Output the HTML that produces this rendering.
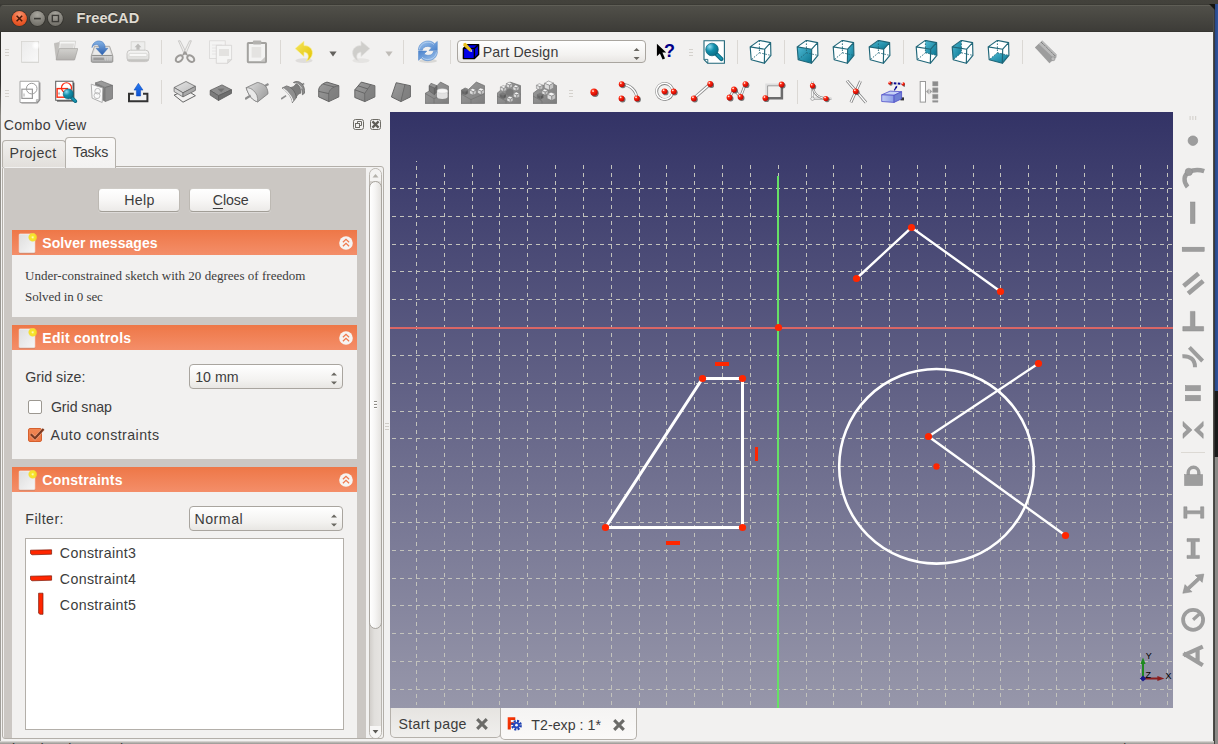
<!DOCTYPE html>
<html lang="en"><head><meta charset="utf-8"><title>FreeCAD</title>
<style>
html,body{margin:0;padding:0}
body{width:1218px;height:744px;overflow:hidden;position:relative;background:#f2f1f0;font-family:"Liberation Sans",sans-serif;font-size:14.5px;color:#3c3c3c}
.abs{position:absolute}
#topstrip{left:0;top:0;width:1218px;height:5px;box-shadow:0 5px 0 #3a3935;background:linear-gradient(#43423c 0,#42413b 80%,#35342f 100%)}
#titlebar{left:0;top:5px;width:1214px;height:27px;background:linear-gradient(#6a6960 0,#504f49 1.2px,#4b4a44 30%,#3d3c38 96%,#302f2b 100%);border-radius:4px 4px 0 0}
#title{text-shadow:0 1px 0 rgba(30,30,26,.7);left:76px;top:9px;font-weight:bold;font-size:14.6px;color:#dfdbd2;letter-spacing:.55px;line-height:18px;white-space:nowrap}
.wbtn{width:15px;height:15px;border-radius:50%;top:11px;box-shadow:0 0 0 1px #33322e}
#leftborder{left:0;top:32px;width:1.3px;height:712px;background:linear-gradient(#2b2a27 0,#2f2e2b 50px,#8e8c86 84px,#9a9893 300px,#a19f9a 100%)}
.tsep{width:1px;height:24px;background:#dbd8d4}
.thandle{width:4px;height:8px;background:repeating-linear-gradient(#d5d2cd 0,#d5d2cd 1px,transparent 1px,transparent 3px)}
.ico{position:absolute;width:24px;height:24px}
svg{display:block}
/* panel */
#combotitle{left:3px;top:116px;line-height:18px;font-size:14.6px;white-space:nowrap}
.tab{border:1px solid #b5b1ab;border-bottom:none;border-radius:4px 4px 0 0;box-sizing:border-box;text-align:center;white-space:nowrap}
#paneframe{left:2px;top:166px;width:382px;height:573px;border:1px solid #b3afa9;border-radius:3px;box-sizing:border-box;background:#f2f1f0}
#scrollbg{left:4px;top:168px;width:362px;height:570px;background:#cbc7c3}
.btn{box-sizing:border-box;border:1px solid #bdb9b3;border-top-color:#cfccc7;border-bottom-color:#a29e97;border-radius:4px;background:linear-gradient(#ffffff,#f8f7f6 50%,#eceae8);height:24px;box-shadow:0 1px 0 rgba(255,255,255,.35)}
.hdr{left:12px;width:345px;height:25px;background:linear-gradient(#ee7747,#f48e69);color:#fff;font-weight:bold;font-size:14.2px;line-height:25px;box-sizing:border-box;padding-left:30px;white-space:nowrap}
.box{left:12px;width:345px;background:#f2f1f0}
.serif{font-family:"Liberation Serif",serif;font-size:12.6px;white-space:nowrap;color:#3c3c3c}
.lbl{white-space:nowrap;line-height:18px}
.spin{box-sizing:border-box;border:1px solid #a9a59f;border-radius:4px;background:linear-gradient(#ffffff,#f3f2f0 65%,#e8e6e3);height:25px;line-height:22px;padding-left:5px;white-space:nowrap}
.chk{box-sizing:border-box;width:14px;height:14px;border:1px solid #9c9891;border-radius:2px;background:#fff}
#list{left:25px;top:538px;width:319px;height:192px;box-sizing:border-box;border:1px solid #b3afa9;background:#fff}
.t{position:absolute;white-space:nowrap;line-height:20px;height:20px}
.hdr{padding:0}
u{text-decoration-thickness:1px;text-underline-offset:2.5px}

</style></head>
<body>
<svg width="0" height="0" style="position:absolute"><defs>
<linearGradient id="gDoc" x1="0" y1="0" x2="1" y2="1"><stop offset="0" stop-color="#ebebeb"/><stop offset="1" stop-color="#f9f9f9"/></linearGradient>
<linearGradient id="gFold" x1="0" y1="0" x2="0" y2="1"><stop offset="0" stop-color="#d2d1ce"/><stop offset="1" stop-color="#b3b1ae"/></linearGradient>
<linearGradient id="gPrn" x1="0" y1="0" x2="0" y2="1"><stop offset="0" stop-color="#f6f6f5"/><stop offset="1" stop-color="#d9d8d6"/></linearGradient>
<linearGradient id="gTeal" x1="0" y1="0" x2="1" y2="1"><stop offset="0" stop-color="#4fbad4"/><stop offset="1" stop-color="#0a7590"/></linearGradient>
<radialGradient id="gLens" cx=".32" cy=".28" r=".8"><stop offset="0" stop-color="#8fdcf2"/><stop offset=".45" stop-color="#1190ac"/><stop offset="1" stop-color="#0a6a82"/></radialGradient>
<radialGradient id="gRed" cx=".35" cy=".3" r=".75"><stop offset="0" stop-color="#ffb0a0"/><stop offset=".3" stop-color="#ff2a10"/><stop offset="1" stop-color="#c00000"/></radialGradient>
<linearGradient id="gBlueA" x1="0" y1="0" x2="0" y2="1"><stop offset="0" stop-color="#86b4e6"/><stop offset="1" stop-color="#2a5eae"/></linearGradient>
<linearGradient id="gBlueR" x1="0" y1="0" x2="1" y2="1"><stop offset="0" stop-color="#a2c6ee"/><stop offset="1" stop-color="#4a82cc"/></linearGradient>
<linearGradient id="gYel" x1="0" y1="0" x2="1" y2="1"><stop offset="0" stop-color="#f5e560"/><stop offset="1" stop-color="#e4c400"/></linearGradient>
<linearGradient id="gDrv" x1="0" y1="0" x2="0" y2="1"><stop offset="0" stop-color="#d8d8d8"/><stop offset="1" stop-color="#a6a6a6"/></linearGradient>
<linearGradient id="gUp" x1="0" y1="0" x2="0" y2="1"><stop offset="0" stop-color="#2a7cf0"/><stop offset="1" stop-color="#0a4fd0"/></linearGradient>
<linearGradient id="gGr1" x1="0" y1="0" x2="1" y2="1"><stop offset="0" stop-color="#e6e6e6"/><stop offset="1" stop-color="#bcbcbc"/></linearGradient>
<linearGradient id="gGr2" x1="0" y1="0" x2="1" y2="1"><stop offset="0" stop-color="#9c9c9c"/><stop offset="1" stop-color="#7e7e7e"/></linearGradient>
<linearGradient id="gBox" x1="0" y1="0" x2="1" y2="0"><stop offset="0" stop-color="#c0ccf4"/><stop offset="1" stop-color="#8a9ce6"/></linearGradient>
<radialGradient id="gGlow"><stop offset="0" stop-color="#fff"/><stop offset=".4" stop-color="#fff" stop-opacity=".85"/><stop offset="1" stop-color="#fff" stop-opacity="0"/></radialGradient>
<linearGradient id="dg" x1="0" y1="0" x2="1" y2="1"><stop offset="0" stop-color="#dedede"/><stop offset="1" stop-color="#f6f6f6"/></linearGradient>
<radialGradient id="yg"><stop offset="0" stop-color="#fffbd0"/><stop offset=".35" stop-color="#f7e52a"/><stop offset=".75" stop-color="#f5de1e" stop-opacity=".9"/><stop offset="1" stop-color="#f5de1e" stop-opacity="0"/></radialGradient>
</defs></svg>
<div id="topstrip" class="abs"></div>
<div id="titlebar" class="abs"></div>
<svg class="abs" style="left:10px;top:9px" width="56" height="19" viewBox="10 9 56 19">
<defs><radialGradient id="wc" cx=".5" cy=".25" r=".8"><stop offset="0" stop-color="#f79572"/><stop offset=".6" stop-color="#ee5f2f"/><stop offset="1" stop-color="#d94a1c"/></radialGradient>
<radialGradient id="wg" cx=".5" cy=".25" r=".8"><stop offset="0" stop-color="#a9a79f"/><stop offset=".6" stop-color="#84827b"/><stop offset="1" stop-color="#6c6a63"/></radialGradient></defs>
<circle cx="19.4" cy="18.5" r="8.3" fill="#33322e"/><circle cx="37.4" cy="18.5" r="8.3" fill="#33322e"/><circle cx="55.4" cy="18.5" r="8.3" fill="#33322e"/>
<circle cx="19.4" cy="18.5" r="7.5" fill="url(#wc)"/><circle cx="37.4" cy="18.5" r="7.5" fill="url(#wg)"/><circle cx="55.4" cy="18.5" r="7.5" fill="url(#wg)"/>
<path d="M16.6 15.7L22.2 21.3M22.2 15.7L16.6 21.3" stroke="#4a1a0a" stroke-width="1.5" fill="none"/>
<path d="M34 18.6H40.8" stroke="#3c3b37" stroke-width="1.6"/>
<rect x="52.3" y="15.4" width="6.2" height="6.2" fill="none" stroke="#3c3b37" stroke-width="1.4"/></svg>
<div class="t" style="left:76.60px;top:8.00px;font-size:14.6px;letter-spacing:0.033px;color:#dfdbd2;font-family:'Liberation Sans',sans-serif;font-weight:bold;text-shadow:0 -1px 0 rgba(30,30,26,.6);">FreeCAD</div>
<div id="leftborder" class="abs"></div>
<div class="abs thandle" style="left:5px;top:49px"></div>
<svg class="ico" style="left:18px;top:40px" width="24" height="24" viewBox="0 0 24 24"><rect x="3.6" y="2.2" width="17.4" height="20.8" fill="#b9b7b3" opacity=".45"/><rect x="3.5" y="1.5" width="17" height="20.6" fill="url(#gDoc)" stroke="#d6d5d2" stroke-width=".8"/><circle cx="18" cy="5.4" r="4.6" fill="url(#gGlow)"/></svg>
<svg class="ico" style="left:54px;top:40px" width="24" height="24" viewBox="0 0 24 24"><path d="M.4 3.4L4.8 2.6L6 4.2H20V19.8H2.4Z" fill="#c2c0bd" stroke="#b0aeab" stroke-width=".5"/><path d="M5.6 1.2H21.6L20 11H4.6Z" fill="#f6f6f5" stroke="#c9c7c4" stroke-width=".7"/><path d="M6.6 3.6H20L19.2 9.2H6Z" fill="#dddcda"/><path d="M5.2 8.6H23.8L20.6 19.9H2.2Z" fill="url(#gFold)" stroke="#a5a3a0" stroke-width=".7"/></svg>
<svg class="ico" style="left:90px;top:40px" width="24" height="24" viewBox="0 0 24 24"><path d="M4.5 6.3H19.6L22.8 15.7H1.3Z" fill="#dddcdb" stroke="#a5a4a2" stroke-width=".9"/><path d="M5.6 7.6H18.6L20.8 14.6H3.2Z" fill="#ebebea"/><rect x="1.3" y="15.5" width="21.5" height="6.8" rx="1" fill="url(#gDrv)" stroke="#8d8d8b" stroke-width=".9"/><rect x="3.4" y="17.6" width="10.5" height="2.4" fill="#9a9a9a"/><path d="M15.6 17.2V20.6M17.4 17.2V20.6M19.2 17.2V20.6M21 17.2V20.6" stroke="#cfcfcf" stroke-width=".9"/><path d="M2 7.6C2.2 3.2 6 .4 9.8 1C13.6 1.6 15.3 4.6 15.2 8.3H17.9L12.2 14.9L6 8.3H9.4C9.4 6 8.2 4.6 6.4 4.6C4.4 4.6 2.9 5.8 2 7.6Z" fill="url(#gBlueA)" stroke="#3a6fb8" stroke-width=".5"/></svg>
<svg class="ico" style="left:126px;top:40px" width="24" height="24" viewBox="0 0 24 24"><rect x="5.1" y="1.8" width="13.8" height="9.6" fill="#eeeeed" stroke="#cfcecb" stroke-width=".7"/><path d="M12 3.6L15.4 7.2H13.6V9.8H10.4V7.2H8.6Z" fill="#bdbcba"/><rect x="1" y="10.2" width="21.9" height="11.4" rx="3.4" fill="url(#gPrn)" stroke="#c3c2bf" stroke-width=".9"/><rect x="3" y="13.4" width="18" height="3.2" rx="1.2" fill="#f8f8f7" stroke="#cdccc9" stroke-width=".6"/><path d="M2.4 20.2H21.6" stroke="#c4c3c0" stroke-width="1.8" stroke-linecap="round"/></svg>
<div class="abs tsep" style="left:161px;top:40px"></div>
<svg class="ico" style="left:173px;top:40px" width="24" height="24" viewBox="0 0 24 24"><path d="M5.4 .8L7.2 .8L13.4 13L11.4 14.4Z" fill="#efeeec" stroke="#bcbab7" stroke-width=".7"/><path d="M18.4 .8L16.6 .8L10.6 13L12.6 14.4Z" fill="#efeeec" stroke="#bcbab7" stroke-width=".7"/><ellipse cx="6.4" cy="18.6" rx="4" ry="2.7" transform="rotate(-40 6.4 18.8)" fill="none" stroke="#9d9b98" stroke-width="2"/><ellipse cx="17.6" cy="18.6" rx="4" ry="2.7" transform="rotate(40 17.6 18.8)" fill="none" stroke="#9d9b98" stroke-width="2"/><path d="M10 15L12 12.4L14 15" fill="none" stroke="#9d9b98" stroke-width="2"/></svg>
<svg class="ico" style="left:209px;top:40px" width="24" height="24" viewBox="0 0 24 24"><rect x=".6" y=".8" width="15.6" height="17.8" fill="#f4f4f3" stroke="#d9d8d6" stroke-width=".8"/><path d="M3 5H13M3 8H13M3 11H13M3 14H13" stroke="#e2e1df" stroke-width=".8"/><path d="M7.3 5.3H22.6V19.6L18.6 23.3H7.3Z" fill="#f5f5f4" stroke="#d3d2d0" stroke-width=".8"/><rect x="10" y="9" width="10" height="7" fill="#e3e2e0"/><path d="M22.6 19.6H18.6V23.3Z" fill="#e0dfdd" stroke="#d3d2d0" stroke-width=".6"/></svg>
<svg class="ico" style="left:245px;top:40px" width="24" height="24" viewBox="0 0 24 24"><rect x="2.8" y="3" width="18.2" height="19.2" rx=".6" fill="#f3f3f2" stroke="#a3a29f" stroke-width="2"/><rect x="7.9" y=".4" width="8.4" height="4.2" rx="1" fill="#b3b2af"/><rect x="6.6" y="7" width="9.6" height="10.6" fill="#e4e3e1"/><path d="M20 17V21.2H15.6Z" fill="#c9c8c5"/></svg>
<div class="abs tsep" style="left:280px;top:40px"></div>
<svg class="ico" style="left:291.5px;top:40px" width="24" height="24" viewBox="0 0 24 24"><ellipse cx="12" cy="20.6" rx="8.6" ry="2.4" fill="#9a9890" opacity=".22"/><path d="M3.1 8.6L12 1.1V5.6C17 5.4 20.6 8.6 20.4 13.2C20.2 16.8 17.8 19.8 14.2 21.3C16 18.8 16.6 16.8 16 15C15.4 13.2 14 12.2 12 12.2V16.6Z" fill="url(#gYel)" stroke="#f8f0a0" stroke-width=".7"/></svg>
<svg class="abs" style="left:327.5px;top:49.5px" width="10" height="8" viewBox="0 0 10 8"><path d="M1.4 1.6H8.6L5 6.4Z" fill="#63615d"/></svg>
<svg class="ico" style="left:349px;top:40px" width="24" height="24" viewBox="0 0 24 24"><ellipse cx="12" cy="20.6" rx="8.6" ry="2.4" fill="#9a9890" opacity=".14"/><path d="M20.9 8.6L12 1.1V5.6C7 5.4 3.4 8.6 3.6 13.2C3.8 16.8 6.2 19.8 9.8 21.3C8 18.8 7.4 16.8 8 15C8.6 13.2 10 12.2 12 12.2V16.6Z" fill="#cfcecb" stroke="#e2e1df" stroke-width=".7"/></svg>
<svg class="abs" style="left:383.5px;top:49.5px" width="10" height="8" viewBox="0 0 10 8"><path d="M1.4 1.6H8.6L5 6.4Z" fill="#bfbcb7"/></svg>
<div class="abs tsep" style="left:403px;top:40px"></div>
<svg class="ico" style="left:415.5px;top:40px" width="24" height="24" viewBox="0 0 24 24"><ellipse cx="12" cy="20.9" rx="9" ry="2" fill="#9a9890" opacity=".28"/><g><path d="M2.4 10.2C2.4 4.5 7 1 12.2 1C15 1 17.2 2.2 18.6 3.8L21.3 1.4V10.6H13L15.6 7.8C14.2 6.8 12.8 6.4 11.4 6.4C8.4 6.4 6.6 8.2 6.4 10.2Z" fill="url(#gBlueR)" stroke="#4b82c8" stroke-width=".5"/><path d="M3.4 9.4C3.8 5.2 7.6 2.2 12.2 2.2C14.6 2.2 16.6 3.2 17.8 4.6" fill="none" stroke="#c2d9f2" stroke-width=".9" opacity=".8"/></g><g transform="rotate(180 11.9 10.85)"><path d="M2.4 10.2C2.4 4.5 7 1 12.2 1C15 1 17.2 2.2 18.6 3.8L21.3 1.4V10.6H13L15.6 7.8C14.2 6.8 12.8 6.4 11.4 6.4C8.4 6.4 6.6 8.2 6.4 10.2Z" fill="url(#gBlueR)" stroke="#4b82c8" stroke-width=".5"/><path d="M3.4 9.4C3.8 5.2 7.6 2.2 12.2 2.2C14.6 2.2 16.6 3.2 17.8 4.6" fill="none" stroke="#c2d9f2" stroke-width=".9" opacity=".8"/></g></svg>
<div class="abs tsep" style="left:450px;top:40px"></div>
<div class="abs spin" style="left:457px;top:40px;width:189px;height:23px"></div>
<svg class="abs" style="left:462px;top:42px" width="18" height="18" viewBox="0 0 18 18"><path d="M1.4 6.4L5.4 2.6H16.6V12.6L12.4 16.6H1.4Z" fill="#0000e8" stroke="#000" stroke-width="1.4" stroke-linejoin="round"/><path d="M1.4 6.4H12.4V16.6M12.4 6.4L16.6 2.6" fill="none" stroke="#000" stroke-width="1.4"/><path d="M1.6 1.2L3.6 .8L9.8 7.6L7.6 9.4L1.2 3.4Z" fill="#e8c020"/><path d="M7.6 9.4L9.8 7.6L10.2 10Z" fill="#c8c8c8"/></svg>
<div class="t" style="left:482.70px;top:42.00px;font-size:14.2px;letter-spacing:0.146px;color:#3c3c3c;font-family:'Liberation Sans',sans-serif;">Part Design</div>
<svg class="abs" style="left:633px;top:47px" width="8" height="14" viewBox="0 0 8 14"><path d="M.6 4L3.6 1L6.6 4ZM.6 10L3.6 13L6.6 10Z" fill="#6a6862"/></svg>
<svg class="ico" style="left:653px;top:40px" width="24" height="24" viewBox="0 0 24 24"><path d="M3.9 3.8V16.2L6.9 13.4L9.6 19.6L12 18.6L9.4 12.6H13.2Z" fill="#000"/><text x="10.9" y="16.8" font-family="Liberation Sans,sans-serif" font-weight="bold" font-size="18" fill="#000088">?</text></svg>
<div class="abs thandle" style="left:689px;top:49px"></div>
<svg class="ico" style="left:701.5px;top:40px" width="24" height="24" viewBox="0 0 24 24"><path d="M2 .8H22.4V23.2H5.6L2 19.6Z" fill="#fff" stroke="#1f6678" stroke-width="1.1"/><path d="M2.4 19.4H5.8V23" fill="none" stroke="#1f6678" stroke-width=".9"/><path d="M14.8 14.4L19.4 19" stroke="#0c6a82" stroke-width="4.2" stroke-linecap="round"/><path d="M15.2 14.8L19.2 18.8" stroke="#1594b0" stroke-width="2.2" stroke-linecap="round"/><circle cx="10" cy="9.5" r="6.3" fill="url(#gLens)" stroke="#0c6279" stroke-width=".7"/></svg>
<div class="abs tsep" style="left:737px;top:40px"></div>
<svg class="ico" style="left:749px;top:40px" width="24" height="24" viewBox="0 0 24 24"><path d="M1.2 6.9L10.4 0.4L21.6 2.6L21.9 15.4L15.3 23.3L2.2 19.7Z" fill="#fff"/><path d="M10.4 0.4L10.4 12.8L2.2 19.7M10.4 12.8L21.9 15.4" fill="none" stroke="#1f6678" stroke-width=".9" stroke-dasharray="1.6 1.4"/><path d="M1.2 6.9L15.7 9.2L15.3 23.3L2.2 19.7ZM1.2 6.9L10.4 0.4L21.6 2.6L15.7 9.2ZM15.7 9.2L21.6 2.6L21.9 15.4L15.3 23.3Z" fill="none" stroke="#1f6678" stroke-width="1.15" stroke-linejoin="round"/></svg>
<div class="abs tsep" style="left:784px;top:40px"></div>
<svg class="ico" style="left:795.5px;top:40px" width="24" height="24" viewBox="0 0 24 24"><path d="M1.2 6.9L10.4 0.4L21.6 2.6L21.9 15.4L15.3 23.3L2.2 19.7Z" fill="#fff"/><path d="M1.2 6.9L15.7 9.2L15.3 23.3L2.2 19.7Z" fill="url(#gTeal)"/><path d="M10.4 0.4L10.4 12.8L2.2 19.7M10.4 12.8L21.9 15.4" fill="none" stroke="#1f6678" stroke-width=".9" stroke-dasharray="1.6 1.4"/><path d="M1.2 6.9L15.7 9.2L15.3 23.3L2.2 19.7ZM1.2 6.9L10.4 0.4L21.6 2.6L15.7 9.2ZM15.7 9.2L21.6 2.6L21.9 15.4L15.3 23.3Z" fill="none" stroke="#1f6678" stroke-width="1.15" stroke-linejoin="round"/></svg>
<svg class="ico" style="left:831.5px;top:40px" width="24" height="24" viewBox="0 0 24 24"><path d="M1.2 6.9L10.4 0.4L21.6 2.6L21.9 15.4L15.3 23.3L2.2 19.7Z" fill="#fff"/><path d="M15.7 9.2L21.6 2.6L21.9 15.4L15.3 23.3Z" fill="url(#gTeal)"/><path d="M10.4 0.4L10.4 12.8L2.2 19.7M10.4 12.8L21.9 15.4" fill="none" stroke="#1f6678" stroke-width=".9" stroke-dasharray="1.6 1.4"/><path d="M1.2 6.9L15.7 9.2L15.3 23.3L2.2 19.7ZM1.2 6.9L10.4 0.4L21.6 2.6L15.7 9.2ZM15.7 9.2L21.6 2.6L21.9 15.4L15.3 23.3Z" fill="none" stroke="#1f6678" stroke-width="1.15" stroke-linejoin="round"/></svg>
<svg class="ico" style="left:867.5px;top:40px" width="24" height="24" viewBox="0 0 24 24"><path d="M1.2 6.9L10.4 0.4L21.6 2.6L21.9 15.4L15.3 23.3L2.2 19.7Z" fill="#fff"/><path d="M1.2 6.9L10.4 0.4L21.6 2.6L15.7 9.2Z" fill="url(#gTeal)"/><path d="M10.4 0.4L10.4 12.8L2.2 19.7M10.4 12.8L21.9 15.4" fill="none" stroke="#1f6678" stroke-width=".9" stroke-dasharray="1.6 1.4"/><path d="M1.2 6.9L15.7 9.2L15.3 23.3L2.2 19.7ZM1.2 6.9L10.4 0.4L21.6 2.6L15.7 9.2ZM15.7 9.2L21.6 2.6L21.9 15.4L15.3 23.3Z" fill="none" stroke="#1f6678" stroke-width="1.15" stroke-linejoin="round"/></svg>
<div class="abs tsep" style="left:903px;top:40px"></div>
<svg class="ico" style="left:914.5px;top:40px" width="24" height="24" viewBox="0 0 24 24"><path d="M1.2 6.9L10.4 0.4L21.6 2.6L21.9 15.4L15.3 23.3L2.2 19.7Z" fill="#fff"/><path d="M10.4 0.4L21.6 2.6L21.9 15.4L10.4 12.8Z" fill="url(#gTeal)"/><path d="M10.4 0.4L10.4 12.8L2.2 19.7M10.4 12.8L21.9 15.4" fill="none" stroke="#1f6678" stroke-width=".9" stroke-dasharray="1.6 1.4"/><path d="M1.2 6.9L15.7 9.2L15.3 23.3L2.2 19.7ZM1.2 6.9L10.4 0.4L21.6 2.6L15.7 9.2ZM15.7 9.2L21.6 2.6L21.9 15.4L15.3 23.3Z" fill="none" stroke="#1f6678" stroke-width="1.15" stroke-linejoin="round"/></svg>
<svg class="ico" style="left:950.5px;top:40px" width="24" height="24" viewBox="0 0 24 24"><path d="M1.2 6.9L10.4 0.4L21.6 2.6L21.9 15.4L15.3 23.3L2.2 19.7Z" fill="#fff"/><path d="M1.2 6.9L10.4 0.4L10.4 12.8L2.2 19.7Z" fill="url(#gTeal)"/><path d="M10.4 0.4L10.4 12.8L2.2 19.7M10.4 12.8L21.9 15.4" fill="none" stroke="#1f6678" stroke-width=".9" stroke-dasharray="1.6 1.4"/><path d="M1.2 6.9L15.7 9.2L15.3 23.3L2.2 19.7ZM1.2 6.9L10.4 0.4L21.6 2.6L15.7 9.2ZM15.7 9.2L21.6 2.6L21.9 15.4L15.3 23.3Z" fill="none" stroke="#1f6678" stroke-width="1.15" stroke-linejoin="round"/></svg>
<svg class="ico" style="left:986.5px;top:40px" width="24" height="24" viewBox="0 0 24 24"><path d="M1.2 6.9L10.4 0.4L21.6 2.6L21.9 15.4L15.3 23.3L2.2 19.7Z" fill="#fff"/><path d="M2.2 19.7L15.3 23.3L21.9 15.4L10.4 12.8Z" fill="url(#gTeal)"/><path d="M10.4 0.4L10.4 12.8L2.2 19.7M10.4 12.8L21.9 15.4" fill="none" stroke="#1f6678" stroke-width=".9" stroke-dasharray="1.6 1.4"/><path d="M1.2 6.9L15.7 9.2L15.3 23.3L2.2 19.7ZM1.2 6.9L10.4 0.4L21.6 2.6L15.7 9.2ZM15.7 9.2L21.6 2.6L21.9 15.4L15.3 23.3Z" fill="none" stroke="#1f6678" stroke-width="1.15" stroke-linejoin="round"/></svg>
<div class="abs tsep" style="left:1022px;top:40px"></div>
<svg class="ico" style="left:1034px;top:40px" width="24" height="24" viewBox="0 0 24 24"><path d="M8.2 .6L22.6 14.4L22.4 17.4L15.4 23.3L14.8 20.2L1 7.5Z" fill="#a9a9a9"/><path d="M8.2 .6L22.6 14.4L19 17.6L4.6 4Z" fill="#b9b9b9"/><path d="M1 7.5L4.6 4L19 17.6L15.4 23.3Z" fill="#9d9d9d"/><path d="M7 2L9.6 4.6M10 4.8L11.6 6.4M12.2 7L13.8 8.6M14.4 9.2L16 10.8M16.6 11.4L18.2 13M18.6 13.4L21.2 16" stroke="#787878" stroke-width=".9"/><circle cx="19" cy="18.8" r="2" fill="#bdbdbd" stroke="#8c8c8c" stroke-width=".6"/></svg>
<div class="abs thandle" style="left:5px;top:89.5px"></div>
<svg class="ico" style="left:18px;top:80px" width="24" height="24" viewBox="0 0 24 24"><path d="M3.4 2.6H22.4V20L19.6 23.6H3.4Z" fill="#8e8e8e"/><path d="M2 1.25H21V19.4L18.2 22.5H2Z" fill="#fff" stroke="#a4a4a4" stroke-width="1"/><circle cx="13.7" cy="8.6" r="5.3" fill="none" stroke="#9a9a9a" stroke-width="1"/><rect x="3.9" y="9.2" width="10.5" height="9.2" fill="none" stroke="#9a9a9a" stroke-width="1.2"/><path d="M18.4 22.3V19.6H20.8" fill="none" stroke="#a4a4a4" stroke-width=".8"/><path d="M6 12.5L7.2 15L6 17.5L4.9 15Z" fill="#cfcfcf"/></svg>
<svg class="ico" style="left:54px;top:80px" width="24" height="24" viewBox="0 0 24 24"><path d="M3 2.6H20.4V21.6H3Z" fill="#555"/><rect x="1.7" y="1.25" width="17.3" height="19" fill="#fff" stroke="#5a5a5a" stroke-width="1"/><circle cx="12.5" cy="7.75" r="5" fill="none" stroke="#ff2a10" stroke-width="1.2"/><rect x="3.1" y="8.6" width="10.3" height="8.6" fill="none" stroke="#ff2a10" stroke-width="1.4"/><path d="M5 11.5L6 13.5L5 15.5L4.2 13.5Z" fill="#b0b0b0"/><path d="M17.6 17.4L21.4 21.2" stroke="#0c6a82" stroke-width="3.6" stroke-linecap="round"/><path d="M18 17.8L21.2 21" stroke="#1594b0" stroke-width="1.8" stroke-linecap="round"/><circle cx="14.3" cy="14" r="5.1" fill="url(#gLens)" stroke="#0c6279" stroke-width=".6"/></svg>
<svg class="ico" style="left:90px;top:80px" width="24" height="24" viewBox="0 0 24 24"><path d="M5.1 3L11.3 1L22.5 5.4L15.1 7.5Z" fill="#9a9a9a" stroke="#6c6c6c" stroke-width=".7"/><path d="M15.1 7.5L22.5 5.4V18.7L15.1 21.6Z" fill="#8c8c8c" stroke="#6c6c6c" stroke-width=".7"/><path d="M5.1 3L15.1 7.5V21.6L5.1 17Z" fill="#7a7a7a"/><path d="M1.25 4.2L12.8 8L12.2 22.5L2.1 18.1Z" fill="#fafafa" stroke="#a8a8a8" stroke-width=".9"/><circle cx="7.6" cy="11.2" r="2.8" fill="none" stroke="#b8b8b8" stroke-width=".9"/><circle cx="7" cy="15.6" r="3" fill="none" stroke="#b8b8b8" stroke-width=".9"/></svg>
<svg class="ico" style="left:126px;top:80px" width="24" height="24" viewBox="0 0 24 24"><path d="M7.8 13.7H3V21.3H21.4V13.7H17" fill="none" stroke="#333" stroke-width="2"/><path d="M12.4 3.3L17 10.1H14.6V16H10.4V10.1H8Z" fill="url(#gUp)" stroke="#0a44b8" stroke-width=".5"/></svg>
<div class="abs tsep" style="left:161px;top:80px"></div>
<svg class="ico" style="left:173px;top:80px" width="24" height="24" viewBox="0 0 24 24"><path d="M1.1 15.1L10 22.2L22.4 15.7L13.4 10Z" fill="none" stroke="#555" stroke-width=".9"/><path d="M1.1 7.5L13 1.5L22.4 6.3L10 12.8Z" fill="url(#gGr1)" stroke="#6a6a6a" stroke-width=".8"/><path d="M1.1 7.5L10 12.8V16.9L1.1 11.6Z" fill="#d6d6d6" stroke="#6a6a6a" stroke-width=".8"/><path d="M10 12.8L22.4 6.3V10.4L10 16.9Z" fill="#a9a9a9" stroke="#6a6a6a" stroke-width=".8"/></svg>
<svg class="ico" style="left:209px;top:80px" width="24" height="24" viewBox="0 0 24 24"><path d="M1.2 10.4L13 4.9L22.5 9.8L9.5 15.7Z" fill="#8f8f8f" stroke="#5c5c5c" stroke-width=".8"/><path d="M1.2 10.4L9.5 15.7V20.5L1.2 15.1Z" fill="#7c7c7c" stroke="#5c5c5c" stroke-width=".8"/><path d="M9.5 15.7L22.5 9.8V13.4L9.5 20.5Z" fill="#6e6e6e" stroke="#5c5c5c" stroke-width=".8"/><path d="M8.4 8.8L15.6 8.4L12.2 12.2Z" fill="#737373"/></svg>
<svg class="ico" style="left:245px;top:80px" width="24" height="24" viewBox="0 0 24 24"><defs><linearGradient id="gRv" x1="0" y1="0" x2="1" y2=".6"><stop offset="0" stop-color="#dcdcdc"/><stop offset=".45" stop-color="#c4c4c4"/><stop offset="1" stop-color="#a2a2a2"/></linearGradient></defs><path d="M19.8 5.9L23.5 4" stroke="#8e8e8e" stroke-width="2.2"/><path d="M1.15 7.7L12.2 2.5C13.4 2.4 14.4 2.7 15.3 3.25C18 4 20 5.4 21.1 6.9C22.4 9 23 11.4 23 13.8L12.7 21.9C10.8 21.4 9 20.4 7.5 19C5.4 17 4 14.8 3 12.5C2.2 10.8 1.6 9.2 1.15 7.7Z" fill="url(#gRv)" stroke="#7a7a7a" stroke-width=".8" stroke-linejoin="round"/><path d="M1.15 7.7C4.4 7.6 6.8 8.8 8.5 10.6C10 12 11.2 13.6 11.9 15.3C12.6 17.4 12.8 19.6 12.7 21.9C10.8 21.4 9 20.4 7.5 19C5.4 17 4 14.8 3 12.5C2.2 10.8 1.6 9.2 1.15 7.7Z" fill="#e9e9e9" stroke="#7a7a7a" stroke-width=".7" stroke-linejoin="round"/><path d="M.1 19L5.6 15.5" stroke="#8e8e8e" stroke-width="2.2"/></svg>
<svg class="ico" style="left:281px;top:80px" width="24" height="24" viewBox="0 0 24 24"><path d="M20.9 4.8L23.2 3.5" stroke="#8e8e8e" stroke-width="1.6"/><path d="M12.4 2.5C14 1.4 16 1.2 17.7 1.7C20.4 2.6 22.2 4.8 23 7.5C23.6 9.6 23.8 11.4 23.5 13.2L21.4 14.8C21.6 12 21 9.6 19.8 7.5C18.2 4.8 15.6 3 12.4 2.5Z" fill="#8c8c8c" stroke="#5e5e5e" stroke-width=".7"/><path d="M14.2 3.2C17.4 4 19.6 6 20.8 8.6" fill="none" stroke="#e0e0e0" stroke-width=".9"/><path d="M9.3 7.5C11.6 7.4 13.6 6 15.1 3.8C18 5 20.2 8.6 19.8 13.2C17.4 13.6 15.8 15.4 15.1 18C14.4 13 12.4 9.6 9.3 7.5Z" fill="#7c7c7c" stroke="#5e5e5e" stroke-width=".6"/><path d="M1.15 8L5.6 5.9C9.6 6.8 12.6 9.6 14.2 13.4C14.9 15 15.2 16.6 15.1 18L11.4 22.7C11.2 19.8 10 17.4 8.4 15.3C6.6 12.6 4.2 10.2 1.15 8Z" fill="#8e8e8e" stroke="#5e5e5e" stroke-width=".7"/><path d="M2.2 8.6C5.6 10.8 8 13.4 9.8 16.2C11 18 11.6 19.8 11.8 21.6" fill="none" stroke="#f0f0f0" stroke-width="1.2"/><path d="M.1 19L5.1 15.6" stroke="#8e8e8e" stroke-width="1.6"/></svg>
<svg class="ico" style="left:317px;top:80px" width="24" height="24" viewBox="0 0 24 24"><path d="M1.7 10C1.7 7 5 3.4 10 2.1L21.8 5.7V16.9L11.8 21.6L1.7 16.9Z" fill="url(#gGr2)" stroke="#5c5c5c" stroke-width=".9"/><path d="M11.8 21.6V14C11.8 10 16 6.6 21.8 5.7" fill="none" stroke="#5c5c5c" stroke-width=".8"/><path d="M1.7 11.4L11.8 13.6" fill="none" stroke="#5c5c5c" stroke-width=".8"/><path d="M6 4L17.4 7" fill="none" stroke="#5c5c5c" stroke-width=".7"/><path d="M11.8 21.6V14C11.8 10 16 6.6 21.8 5.7V16.9Z" fill="#7b7b7b" opacity=".6"/></svg>
<svg class="ico" style="left:353px;top:80px" width="24" height="24" viewBox="0 0 24 24"><path d="M1.8 9.8L8.3 2.1L21.9 5.7V16.9L11.8 21.6L1.8 17.5Z" fill="url(#gGr2)" stroke="#5c5c5c" stroke-width=".9"/><path d="M11.8 21.6V13.4L17.6 4.8M1.8 9.8L11.8 13.4M5 5.8L15 9" fill="none" stroke="#5c5c5c" stroke-width=".8"/><path d="M11.8 21.6V13.4L17.6 4.8L21.9 5.7V16.9Z" fill="#7b7b7b" opacity=".55"/></svg>
<svg class="ico" style="left:389px;top:80px" width="24" height="24" viewBox="0 0 24 24"><path d="M2.4 16.9L7.2 2.7L21.4 5.7V16.9L11.9 21.6Z" fill="url(#gGr2)" stroke="#5c5c5c" stroke-width=".9"/><path d="M11.9 21.6L16 4.6" fill="none" stroke="#5c5c5c" stroke-width=".8"/><path d="M11.9 21.6L16 4.6L21.4 5.7V16.9Z" fill="#7b7b7b" opacity=".55"/></svg>
<svg class="ico" style="left:425px;top:80px" width="24" height="24" viewBox="0 0 24 24"><path d="M.1 23.4V13.4L4.3 11V5.7L6 3.3L12 5.7L15.5 2.1L23.8 6.3V23.4Z" fill="url(#gGr2)" stroke="#6a6a6a" stroke-width=".7"/><path d="M.1 13.4L9 18.6V23.4M9 18.6L23.8 13" fill="none" stroke="#6e6e6e" stroke-width=".7"/><path d="M4.3 5.7L9.4 8V14.6L4.3 11Z" fill="#777" stroke="#5c5c5c" stroke-width=".6"/><path d="M9.4 8L12 5.7V11.4L9.4 14.6Z" fill="#6a6a6a" stroke="#5c5c5c" stroke-width=".6"/><path d="M12 11V17C12 19.6 22.6 19.6 22.6 17V11Z" fill="#e2e2e2"/><ellipse cx="17.3" cy="11" rx="5.3" ry="2.2" fill="#f7f7f7" stroke="#c8c8c8" stroke-width=".5"/></svg>
<svg class="ico" style="left:461px;top:80px" width="24" height="24" viewBox="0 0 24 24"><path d="M0 23.4V10.4L4.1 8L7.6 9.4L15.3 2.1L23.6 5.7V23.4Z" fill="url(#gGr2)" stroke="#6a6a6a" stroke-width=".7"/><path d="M0 14L10 19.6V23.4M10 19.6L23.6 13.6" fill="none" stroke="#707070" stroke-width=".7"/><path d="M0.6999999999999997 10.45L3.4899999999999998 8.9L6.9 10.295L4.109999999999999 11.845Z" fill="#7a7a7a" stroke="#777" stroke-width=".5"/><path d="M0.6999999999999997 10.45L4.109999999999999 11.845V15.1L0.6999999999999997 13.55Z" fill="#666" stroke="#777" stroke-width=".5"/><path d="M4.109999999999999 11.845L6.9 10.295V13.55L4.109999999999999 15.1Z" fill="#5a5a5a" stroke="#777" stroke-width=".5"/><path d="M8.5 10.100000000000001L11.56 8.4L15.3 9.93L12.24 11.63Z" fill="#f4f4f4" stroke="#777" stroke-width=".5"/><path d="M8.5 10.100000000000001L12.24 11.63V15.200000000000001L8.5 13.5Z" fill="#dcdcdc" stroke="#777" stroke-width=".5"/><path d="M12.24 11.63L15.3 9.93V13.5L12.24 15.200000000000001Z" fill="#c4c4c4" stroke="#777" stroke-width=".5"/><path d="M16.6 9.700000000000001L19.66 8.0L23.4 9.530000000000001L20.34 11.23Z" fill="#f4f4f4" stroke="#777" stroke-width=".5"/><path d="M16.6 9.700000000000001L20.34 11.23V14.8L16.6 13.1Z" fill="#dcdcdc" stroke="#777" stroke-width=".5"/><path d="M20.34 11.23L23.4 9.530000000000001V13.1L20.34 14.8Z" fill="#c4c4c4" stroke="#777" stroke-width=".5"/></svg>
<svg class="ico" style="left:497px;top:80px" width="24" height="24" viewBox="0 0 24 24"><path d="M0 23.4V13.4L13 2.1L23.7 5.7V23.4Z" fill="url(#gGr2)" stroke="#6a6a6a" stroke-width=".7"/><path d="M0 16L9 21V23.4M9 21L23.7 14" fill="none" stroke="#707070" stroke-width=".7"/><ellipse cx="12.6" cy="12.4" rx="4" ry="3.4" fill="#777"/><path d="M3.4 7.05L6.1899999999999995 5.5L9.6 6.895L6.8100000000000005 8.445Z" fill="#f4f4f4" stroke="#777" stroke-width=".5"/><path d="M3.4 7.05L6.8100000000000005 8.445V11.7L3.4 10.15Z" fill="#dcdcdc" stroke="#777" stroke-width=".5"/><path d="M6.8100000000000005 8.445L9.6 6.895V10.15L6.8100000000000005 11.7Z" fill="#c4c4c4" stroke="#777" stroke-width=".5"/><path d="M9.3 3.6500000000000004L12.09 2.1L15.5 3.495L12.71 5.045Z" fill="#f4f4f4" stroke="#777" stroke-width=".5"/><path d="M9.3 3.6500000000000004L12.71 5.045V8.3L9.3 6.75Z" fill="#dcdcdc" stroke="#777" stroke-width=".5"/><path d="M12.71 5.045L15.5 3.495V6.75L12.71 8.3Z" fill="#c4c4c4" stroke="#777" stroke-width=".5"/><path d="M15.799999999999999 6.45L18.59 4.9L22.0 6.295L19.209999999999997 7.845Z" fill="#f4f4f4" stroke="#777" stroke-width=".5"/><path d="M15.799999999999999 6.45L19.209999999999997 7.845V11.1L15.799999999999999 9.55Z" fill="#dcdcdc" stroke="#777" stroke-width=".5"/><path d="M19.209999999999997 7.845L22.0 6.295V9.55L19.209999999999997 11.1Z" fill="#c4c4c4" stroke="#777" stroke-width=".5"/><path d="M16.4 13.549999999999999L19.19 12.0L22.6 13.395L19.81 14.945Z" fill="#f4f4f4" stroke="#777" stroke-width=".5"/><path d="M16.4 13.549999999999999L19.81 14.945V18.2L16.4 16.65Z" fill="#dcdcdc" stroke="#777" stroke-width=".5"/><path d="M19.81 14.945L22.6 13.395V16.65L19.81 18.2Z" fill="#c4c4c4" stroke="#777" stroke-width=".5"/><path d="M9.9 17.75L12.69 16.2L16.1 17.595L13.31 19.145Z" fill="#f4f4f4" stroke="#777" stroke-width=".5"/><path d="M9.9 17.75L13.31 19.145V22.400000000000002L9.9 20.85Z" fill="#dcdcdc" stroke="#777" stroke-width=".5"/><path d="M13.31 19.145L16.1 17.595V20.85L13.31 22.400000000000002Z" fill="#c4c4c4" stroke="#777" stroke-width=".5"/><path d="M2.8000000000000003 14.149999999999999L5.59 12.6L9.0 13.995L6.210000000000001 15.545Z" fill="#7a7a7a" stroke="#777" stroke-width=".5"/><path d="M2.8000000000000003 14.149999999999999L6.210000000000001 15.545V18.8L2.8000000000000003 17.25Z" fill="#666" stroke="#777" stroke-width=".5"/><path d="M6.210000000000001 15.545L9.0 13.995V17.25L6.210000000000001 18.8Z" fill="#5a5a5a" stroke="#777" stroke-width=".5"/></svg>
<svg class="ico" style="left:533px;top:80px" width="24" height="24" viewBox="0 0 24 24"><path d="M0 23.4V13.4L15.4 1.5L23.7 5.7V23.4Z" fill="url(#gGr2)" stroke="#6a6a6a" stroke-width=".7"/><path d="M0 16L9 21V23.4" fill="none" stroke="#707070" stroke-width=".7"/><path d="M3.3999999999999995 5.300000000000001L6.279999999999999 3.7L9.8 5.140000000000001L6.92 6.74Z" fill="#f4f4f4" stroke="#777" stroke-width=".5"/><path d="M3.3999999999999995 5.300000000000001L6.92 6.74V10.100000000000001L3.3999999999999995 8.5Z" fill="#dcdcdc" stroke="#777" stroke-width=".5"/><path d="M6.92 6.74L9.8 5.140000000000001V8.5L6.92 10.100000000000001Z" fill="#c4c4c4" stroke="#777" stroke-width=".5"/><path d="M11.4 3.3L15.54 1.0L20.6 3.07L16.46 5.369999999999999Z" fill="#f4f4f4" stroke="#777" stroke-width=".5"/><path d="M11.4 3.3L16.46 5.369999999999999V10.2L11.4 7.8999999999999995Z" fill="#dcdcdc" stroke="#777" stroke-width=".5"/><path d="M16.46 5.369999999999999L20.6 3.07V7.8999999999999995L16.46 10.2Z" fill="#c4c4c4" stroke="#777" stroke-width=".5"/><path d="M8.8 10.649999999999999L11.59 9.1L15.0 10.495L12.21 12.045Z" fill="#f4f4f4" stroke="#777" stroke-width=".5"/><path d="M8.8 10.649999999999999L12.21 12.045V15.299999999999999L8.8 13.75Z" fill="#dcdcdc" stroke="#777" stroke-width=".5"/><path d="M12.21 12.045L15.0 10.495V13.75L12.21 15.299999999999999Z" fill="#c4c4c4" stroke="#777" stroke-width=".5"/><path d="M14.2 14.299999999999999L17.979999999999997 12.2L22.599999999999998 14.089999999999998L18.82 16.189999999999998Z" fill="#f4f4f4" stroke="#777" stroke-width=".5"/><path d="M14.2 14.299999999999999L18.82 16.189999999999998V20.599999999999998L14.2 18.5Z" fill="#dcdcdc" stroke="#777" stroke-width=".5"/><path d="M18.82 16.189999999999998L22.599999999999998 14.089999999999998V18.5L18.82 20.599999999999998Z" fill="#c4c4c4" stroke="#777" stroke-width=".5"/><path d="M4.1 14.75L6.890000000000001 13.200000000000001L10.3 14.595L7.51 16.145Z" fill="#7a7a7a" stroke="#777" stroke-width=".5"/><path d="M4.1 14.75L7.51 16.145V19.400000000000002L4.1 17.85Z" fill="#666" stroke="#777" stroke-width=".5"/><path d="M7.51 16.145L10.3 14.595V17.85L7.51 19.400000000000002Z" fill="#5a5a5a" stroke="#777" stroke-width=".5"/></svg>
<div class="abs thandle" style="left:569px;top:89.5px"></div>
<svg class="ico" style="left:582px;top:80px" width="24" height="24" viewBox="0 0 24 24"><circle cx="13.1" cy="13.299999999999999" r="3.6" fill="#4a4a4a" opacity=".75"/><circle cx="12" cy="12.2" r="3.6" fill="url(#gRed)"/><circle cx="11.1" cy="11.2" r=".8" fill="#fff" opacity=".75"/></svg>
<svg class="ico" style="left:618px;top:80px" width="24" height="24" viewBox="0 0 24 24"><path d="M3.7 4.2C12 4.6 18.4 10.4 18.9 18.4" fill="none" stroke="#8a8a8a" stroke-width="3"/><path d="M3.7 4.2C12 4.6 18.4 10.4 18.9 18.4" fill="none" stroke="#fff" stroke-width="1.4"/><circle cx="4.800000000000001" cy="5.300000000000001" r="2.9" fill="#4a4a4a" opacity=".75"/><circle cx="3.7" cy="4.2" r="2.9" fill="url(#gRed)"/><circle cx="2.8000000000000003" cy="3.2" r=".8" fill="#fff" opacity=".75"/><circle cx="4.6" cy="19.5" r="2.9" fill="#4a4a4a" opacity=".75"/><circle cx="3.5" cy="18.4" r="2.9" fill="url(#gRed)"/><circle cx="2.6" cy="17.4" r=".8" fill="#fff" opacity=".75"/><circle cx="20.0" cy="19.5" r="2.9" fill="#4a4a4a" opacity=".75"/><circle cx="18.9" cy="18.4" r="2.9" fill="url(#gRed)"/><circle cx="18.0" cy="17.4" r=".8" fill="#fff" opacity=".75"/></svg>
<svg class="ico" style="left:654px;top:80px" width="24" height="24" viewBox="0 0 24 24"><circle cx="10.75" cy="11.55" r="8.1" fill="none" stroke="#808080" stroke-width="2.9"/><circle cx="10.55" cy="11.3" r="8.1" fill="none" stroke="#fff" stroke-width="1.6"/><circle cx="11.6" cy="12.4" r="2.9" fill="#4a4a4a" opacity=".75"/><circle cx="10.5" cy="11.3" r="2.9" fill="url(#gRed)"/><circle cx="9.6" cy="10.3" r=".8" fill="#fff" opacity=".75"/><circle cx="20.8" cy="12.6" r="2.9" fill="#4a4a4a" opacity=".75"/><circle cx="19.7" cy="11.5" r="2.9" fill="url(#gRed)"/><circle cx="18.8" cy="10.5" r=".8" fill="#fff" opacity=".75"/></svg>
<svg class="ico" style="left:690px;top:80px" width="24" height="24" viewBox="0 0 24 24"><path d="M3.8 18.4L20.2 4" stroke="#8a8a8a" stroke-width="3.2"/><path d="M3.8 18.4L20.2 4" stroke="#fff" stroke-width="1.5"/><circle cx="4.9" cy="19.5" r="2.9" fill="#4a4a4a" opacity=".75"/><circle cx="3.8" cy="18.4" r="2.9" fill="url(#gRed)"/><circle cx="2.9" cy="17.4" r=".8" fill="#fff" opacity=".75"/><circle cx="21.3" cy="5.1" r="2.9" fill="#4a4a4a" opacity=".75"/><circle cx="20.2" cy="4" r="2.9" fill="url(#gRed)"/><circle cx="19.3" cy="3" r=".8" fill="#fff" opacity=".75"/></svg>
<svg class="ico" style="left:726px;top:80px" width="24" height="24" viewBox="0 0 24 24"><path d="M3.5 17.5L8 9.5L14.5 16.9L19.4 4.1" fill="none" stroke="#8a8a8a" stroke-width="2.8"/><path d="M3.5 17.5L8 9.5L14.5 16.9L19.4 4.1" fill="none" stroke="#fff" stroke-width="1.2"/><circle cx="4.6" cy="18.6" r="2.9" fill="#4a4a4a" opacity=".75"/><circle cx="3.5" cy="17.5" r="2.9" fill="url(#gRed)"/><circle cx="2.6" cy="16.5" r=".8" fill="#fff" opacity=".75"/><circle cx="9.1" cy="10.6" r="2.9" fill="#4a4a4a" opacity=".75"/><circle cx="8" cy="9.5" r="2.9" fill="url(#gRed)"/><circle cx="7.1" cy="8.5" r=".8" fill="#fff" opacity=".75"/><circle cx="15.6" cy="18.0" r="2.9" fill="#4a4a4a" opacity=".75"/><circle cx="14.5" cy="16.9" r="2.9" fill="url(#gRed)"/><circle cx="13.6" cy="15.899999999999999" r=".8" fill="#fff" opacity=".75"/><circle cx="20.5" cy="5.199999999999999" r="2.9" fill="#4a4a4a" opacity=".75"/><circle cx="19.4" cy="4.1" r="2.9" fill="url(#gRed)"/><circle cx="18.5" cy="3.0999999999999996" r=".8" fill="#fff" opacity=".75"/></svg>
<svg class="ico" style="left:762px;top:80px" width="24" height="24" viewBox="0 0 24 24"><path d="M4.2 18.3H19.9V4.2" fill="none" stroke="#6c6c6c" stroke-width="2.5"/><path d="M4.4 18V4.6H19.6" fill="none" stroke="#dedede" stroke-width="2.3"/><path d="M5.6 17V5.8H18.6" fill="none" stroke="#8a8a8a" stroke-width=".8"/><circle cx="4.4" cy="19.200000000000003" r="2.9" fill="#4a4a4a" opacity=".75"/><circle cx="3.3" cy="18.1" r="2.9" fill="url(#gRed)"/><circle cx="2.4" cy="17.1" r=".8" fill="#fff" opacity=".75"/><circle cx="20.700000000000003" cy="5.6" r="2.9" fill="#4a4a4a" opacity=".75"/><circle cx="19.6" cy="4.5" r="2.9" fill="url(#gRed)"/><circle cx="18.700000000000003" cy="3.5" r=".8" fill="#fff" opacity=".75"/></svg>
<div class="abs tsep" style="left:797px;top:80px"></div>
<svg class="ico" style="left:808.5px;top:80px" width="24" height="24" viewBox="0 0 24 24"><path d="M3.5 1.4V18.8H22.4" fill="none" stroke="#9a9a9a" stroke-width="2.2"/><path d="M3.5 1.4V18.8H22.4" fill="none" stroke="#fff" stroke-width=".9"/><path d="M3.5 5.7C4 13 9 18 16.9 18.5" fill="none" stroke="#8a8a8a" stroke-width="2.4"/><path d="M3.5 5.7C4 13 9 18 16.9 18.5" fill="none" stroke="#fff" stroke-width="1"/><path d="M1.4 18.8L3.5 16.6L5.6 18.8L3.5 21Z" fill="#eee" stroke="#8a8a8a" stroke-width=".6"/><circle cx="4.6" cy="6.800000000000001" r="2.6" fill="#4a4a4a" opacity=".75"/><circle cx="3.5" cy="5.7" r="2.6" fill="url(#gRed)"/><circle cx="2.6" cy="4.7" r=".8" fill="#fff" opacity=".75"/><circle cx="18.0" cy="19.6" r="2.6" fill="#4a4a4a" opacity=".75"/><circle cx="16.9" cy="18.5" r="2.6" fill="url(#gRed)"/><circle cx="15.999999999999998" cy="17.5" r=".8" fill="#fff" opacity=".75"/></svg>
<svg class="ico" style="left:844px;top:80px" width="24" height="24" viewBox="0 0 24 24"><path d="M2.9 .6L22 22.5M16.5 1.2L6.9 22.3" stroke="#7e7e7e" stroke-width="2.8"/><path d="M2.9 .6L22 22.5M16.5 1.2L6.9 22.3" stroke="#fff" stroke-width="1.3"/><circle cx="12.799999999999999" cy="12.299999999999999" r="2.8" fill="#4a4a4a" opacity=".75"/><circle cx="11.7" cy="11.2" r="2.8" fill="url(#gRed)"/><circle cx="10.799999999999999" cy="10.2" r=".8" fill="#fff" opacity=".75"/></svg>
<svg class="ico" style="left:881px;top:80px" width="24" height="24" viewBox="0 0 24 24"><path d="M19.4 17.4H23V20.4H19.4Z" fill="#333"/><path d="M.7 14.8L9.1 11.1L20.6 11.7L13.1 15.3Z" fill="#c4d0f6" stroke="#4e4ec8" stroke-width=".8"/><path d="M.7 14.8L13.1 15.3V22.4L.7 21.5Z" fill="url(#gBox)" stroke="#4e4ec8" stroke-width=".8"/><path d="M13.1 15.3L20.6 11.7V18.8L13.1 22.4Z" fill="#6f80d4" stroke="#4e4ec8" stroke-width=".8"/><path d="M8.8 2.9L22.2 4" stroke="#0a0a90" stroke-width="2" stroke-dasharray="2.6 1.4"/><path d="M13.3 10.4L15.3 7" stroke="#0a0a90" stroke-width="1.2"/><path d="M16.2 5.6L16 8.4L13.9 7.2Z" fill="#0a0a90"/><circle cx="9.9" cy="4.0" r="1.7" fill="#4a4a4a" opacity=".75"/><circle cx="8.8" cy="2.9" r="1.7" fill="url(#gRed)"/><circle cx="7.9" cy="1.9" r=".8" fill="#fff" opacity=".75"/><circle cx="23.3" cy="5.1" r="1.7" fill="#4a4a4a" opacity=".75"/><circle cx="22.2" cy="4" r="1.7" fill="url(#gRed)"/><circle cx="21.3" cy="3" r=".8" fill="#fff" opacity=".75"/></svg>
<svg class="ico" style="left:917px;top:80px" width="24" height="24" viewBox="0 0 24 24"><rect x="3.2" y="1.5" width="5.3" height="20.6" fill="#fff" stroke="#9a9a9a" stroke-width="1"/><path d="M15.6 1.5H21V6H15.6ZM15.6 7.8H21V12.4H15.6ZM15.6 14.2H21V18.8H15.6ZM15.6 20.4H21V22.2H15.6Z" fill="#8c8c8c" stroke="#a8a8a8" stroke-width=".5"/><path d="M9 11.5L12 8.4V14.6ZM15.2 11.5L12.2 8.4V14.6Z" fill="#a2a2a2"/><path d="M12.1 8V15" stroke="#f2f1f0" stroke-width=".8"/></svg>
<div class="t" style="left:3.70px;top:115.00px;font-size:14.2px;letter-spacing:0.275px;color:#3c3c3c;font-family:'Liberation Sans',sans-serif;">Combo View</div>
<svg class="abs" style="left:352px;top:118px" width="30" height="13" viewBox="0 0 30 13"><g fill="none" stroke="#6e6c66" stroke-width="1"><rect x="1.5" y="1.5" width="10" height="10" rx="2"/><rect x="18.5" y="1.5" width="10" height="10" rx="2"/><path d="M5.5 5.5V3.5H9.5V7.5H7.5"/><rect x="3.5" y="5.5" width="4" height="4"/></g><path d="M20.4 3.4L26.6 9.6M26.6 3.4L20.4 9.6" stroke="#5e5c56" stroke-width="2.2" fill="none"/></svg>
<div id="paneframe" class="abs"></div>
<div id="scrollbg" class="abs"></div>
<div class="abs tab" style="left:2px;top:140px;width:64px;height:27px;background:linear-gradient(#f1f0ee,#e2dfdb)"></div>
<div class="abs tab" style="left:65px;top:137px;width:51px;height:31px;background:linear-gradient(#faf9f8,#f3f2f1)"></div>
<div class="t" style="left:9.60px;top:143.00px;font-size:14.2px;letter-spacing:0.401px;color:#3c3c3c;font-family:'Liberation Sans',sans-serif;">Project</div>
<div class="t" style="left:73.10px;top:142.00px;font-size:14.2px;letter-spacing:-0.280px;color:#3c3c3c;font-family:'Liberation Sans',sans-serif;">Tasks</div>
<div class="abs" style="left:369px;top:168px;width:13px;height:571px;box-sizing:border-box;border:1px solid #b9b5af;border-radius:7px;background:linear-gradient(90deg,#d2cfcb,#e1dfdc 40%,#e6e4e1)"></div>
<div class="abs" style="left:370px;top:169px;width:11px;height:12px;border-radius:6px 6px 0 0;background:#f4f3f2"></div>
<div class="abs" style="left:370px;top:726px;width:11px;height:12px;border-radius:0 0 6px 6px;background:#f7f6f5"></div>
<div class="abs" style="left:369px;top:181px;width:13px;height:448px;box-sizing:border-box;border:1px solid #a8a49e;border-radius:7px;background:linear-gradient(90deg,#ffffff,#f6f5f4 45%,#e4e2df)"></div>
<svg class="abs" style="left:372px;top:173px" width="7" height="5" viewBox="0 0 7 5"><path d="M.5 4.5L3.5 1L6.5 4.5Z" fill="#b4b1ab"/></svg>
<svg class="abs" style="left:372px;top:729px" width="7" height="5" viewBox="0 0 7 5"><path d="M.6 1L3.5 4.4L6.4 1Z" fill="#5c5a55"/></svg>
<div class="abs" style="left:374px;top:401px;width:3px;height:9px;background:repeating-linear-gradient(#8f8c86 0,#8f8c86 1px,#fff 1px,#fff 2px,transparent 2px,transparent 3px)"></div>
<div class="abs" style="left:385px;top:423px;width:4px;height:7px;background:repeating-linear-gradient(#cfccc7 0,#cfccc7 1px,transparent 1px,transparent 3px)"></div>
<div class="abs btn" style="left:98px;top:188px;width:82px"></div>
<div class="abs btn" style="left:189px;top:188px;width:82px"></div>
<div class="t" style="left:124.20px;top:190.00px;font-size:14.2px;letter-spacing:0.324px;color:#3c3c3c;font-family:'Liberation Sans',sans-serif;">Help</div>
<div class="t" style="left:212.80px;top:190.00px;font-size:14.2px;letter-spacing:-0.101px;color:#3c3c3c;font-family:'Liberation Sans',sans-serif;"><u>C</u>lose</div>
<div class="abs hdr" style="top:230px"></div>
<div class="abs box" style="top:255px;height:62px"></div>
<svg class="abs" style="left:18px;top:233px" width="20" height="22" viewBox="0 0 20 22">
<rect x="1" y="1.5" width="16" height="19" rx="1" fill="#8d6c5c" opacity=".55"/>
<rect x="1.2" y="1" width="15.6" height="18.6" rx=".8" fill="url(#dg)" stroke="#fbfbfb" stroke-width=".6"/>
<circle cx="14.7" cy="4.3" r="4.8" fill="url(#yg)"/></svg>
<div class="t" style="left:42.30px;top:233.00px;font-size:14.0px;letter-spacing:0.066px;color:#fff;font-family:'Liberation Sans',sans-serif;font-weight:bold;">Solver messages</div>
<svg class="abs" style="left:338px;top:235px" width="16" height="16" viewBox="0 0 16 16"><circle cx="8" cy="8" r="6.8" fill="#f6f4f2"/><path d="M4.9 7.3L8 4.3L11.1 7.3M4.9 11.3L8 8.3L11.1 11.3" fill="none" stroke="#ef7a4d" stroke-width="1.25"/></svg>
<div class="abs hdr" style="top:325px"></div>
<div class="abs box" style="top:350px;height:109px"></div>
<svg class="abs" style="left:18px;top:328px" width="20" height="22" viewBox="0 0 20 22">
<rect x="1" y="1.5" width="16" height="19" rx="1" fill="#8d6c5c" opacity=".55"/>
<rect x="1.2" y="1" width="15.6" height="18.6" rx=".8" fill="url(#dg)" stroke="#fbfbfb" stroke-width=".6"/>
<circle cx="14.7" cy="4.3" r="4.8" fill="url(#yg)"/></svg>
<div class="t" style="left:42.30px;top:328.00px;font-size:14.0px;letter-spacing:0.272px;color:#fff;font-family:'Liberation Sans',sans-serif;font-weight:bold;">Edit controls</div>
<svg class="abs" style="left:338px;top:330px" width="16" height="16" viewBox="0 0 16 16"><circle cx="8" cy="8" r="6.8" fill="#f6f4f2"/><path d="M4.9 7.3L8 4.3L11.1 7.3M4.9 11.3L8 8.3L11.1 11.3" fill="none" stroke="#ef7a4d" stroke-width="1.25"/></svg>
<div class="abs hdr" style="top:467px"></div>
<div class="abs box" style="top:492px;height:246px"></div>
<svg class="abs" style="left:18px;top:470px" width="20" height="22" viewBox="0 0 20 22">
<rect x="1" y="1.5" width="16" height="19" rx="1" fill="#8d6c5c" opacity=".55"/>
<rect x="1.2" y="1" width="15.6" height="18.6" rx=".8" fill="url(#dg)" stroke="#fbfbfb" stroke-width=".6"/>
<circle cx="14.7" cy="4.3" r="4.8" fill="url(#yg)"/></svg>
<div class="t" style="left:42.30px;top:470.00px;font-size:14.0px;letter-spacing:0.246px;color:#fff;font-family:'Liberation Sans',sans-serif;font-weight:bold;">Constraints</div>
<svg class="abs" style="left:338px;top:472px" width="16" height="16" viewBox="0 0 16 16"><circle cx="8" cy="8" r="6.8" fill="#f6f4f2"/><path d="M4.9 7.3L8 4.3L11.1 7.3M4.9 11.3L8 8.3L11.1 11.3" fill="none" stroke="#ef7a4d" stroke-width="1.25"/></svg>
<div class="t" style="left:25.00px;top:266.00px;font-size:13px;letter-spacing:0.025px;color:#3c3c3c;font-family:'Liberation Serif',serif;">Under-constrained sketch with 20 degrees of freedom</div>
<div class="t" style="left:25.00px;top:287.00px;font-size:13px;letter-spacing:-0.085px;color:#3c3c3c;font-family:'Liberation Serif',serif;">Solved in 0 sec</div>
<div class="t" style="left:25.30px;top:367.00px;font-size:14.2px;letter-spacing:0.013px;color:#3c3c3c;font-family:'Liberation Sans',sans-serif;">Grid size:</div>
<div class="abs spin" style="left:189px;top:364px;width:154px"></div>
<div class="t" style="left:195.20px;top:367.00px;font-size:14.2px;letter-spacing:0.020px;color:#3c3c3c;font-family:'Liberation Sans',sans-serif;">10 mm</div>
<svg class="abs" style="left:329.5px;top:371px" width="8" height="15" viewBox="0 0 8 15"><path d="M1 4.5L4 1.5L7 4.5Z M1 10.5L4 13.5L7 10.5Z" fill="#6a6862"/></svg>
<div class="abs chk" style="left:28px;top:400px"></div>
<div class="t" style="left:50.90px;top:397.00px;font-size:14.2px;letter-spacing:-0.052px;color:#3c3c3c;font-family:'Liberation Sans',sans-serif;">Grid snap</div>
<div class="abs chk" style="left:28px;top:428px;background:linear-gradient(#f08653,#ee7745);border-color:#d5602d"></div>
<svg class="abs" style="left:27px;top:426px" width="18" height="18" viewBox="0 0 18 18"><path d="M3.8 8.3L8 12.3L16.6 3.1" fill="none" stroke="#f9c9b0" stroke-width="3.4" opacity=".55"/><path d="M3.8 8.3L8 12.3L16.6 3.1" fill="none" stroke="#7a3a22" stroke-width="2.2"/></svg>
<div class="t" style="left:50.50px;top:425.00px;font-size:14.2px;letter-spacing:0.455px;color:#3c3c3c;font-family:'Liberation Sans',sans-serif;">Auto constraints</div>
<div class="t" style="left:25.30px;top:509.00px;font-size:14.2px;letter-spacing:0.457px;color:#3c3c3c;font-family:'Liberation Sans',sans-serif;">Filter:</div>
<div class="abs spin" style="left:189px;top:506px;width:154px"></div>
<div class="t" style="left:194.40px;top:509.00px;font-size:14.2px;letter-spacing:0.523px;color:#3c3c3c;font-family:'Liberation Sans',sans-serif;">Normal</div>
<svg class="abs" style="left:329.5px;top:513px" width="8" height="15" viewBox="0 0 8 15"><path d="M1 4.5L4 1.5L7 4.5Z M1 10.5L4 13.5L7 10.5Z" fill="#6a6862"/></svg>
<div id="list" class="abs"></div>
<div class="t" style="left:59.80px;top:543.00px;font-size:14.2px;letter-spacing:0.353px;color:#3c3c3c;font-family:'Liberation Sans',sans-serif;">Constraint3</div>
<div class="t" style="left:59.80px;top:569.00px;font-size:14.2px;letter-spacing:0.353px;color:#3c3c3c;font-family:'Liberation Sans',sans-serif;">Constraint4</div>
<div class="t" style="left:59.80px;top:595.00px;font-size:14.2px;letter-spacing:0.353px;color:#3c3c3c;font-family:'Liberation Sans',sans-serif;">Constraint5</div>
<svg class="abs" style="left:28px;top:545px" width="28" height="74" viewBox="28 545 28 74"><g fill="#ff2600" stroke="#7d1a08" stroke-width=".7"><path d="M30.5 550.2L51.6 549.8V554.2L32 554.8L30.5 553.6Z"/><path d="M30.5 576.2L51.6 575.8V580.2L32 580.8L30.5 579.6Z"/><path d="M38.6 593.2H43V614.3L40 614.3L38.6 613.2Z"/></g></svg>
<svg id="view3d" width="783" height="596" viewBox="390 112 783 596" style="position:absolute;left:390px;top:112px" shape-rendering="crispEdges">
<defs><linearGradient id="bg" x1="0" y1="0" x2="0" y2="1"><stop offset="0" stop-color="#333366"/><stop offset="1" stop-color="#9797aa"/></linearGradient></defs>
<rect x="390" y="112" width="783" height="596" fill="url(#bg)"/>
<g stroke="#c2c2bc" stroke-width="1" stroke-dasharray="4 4" fill="none">
<path d="M392 188.5H1173 M392 216.5H1173 M392 244.5H1173 M392 271.5H1173 M392 299.5H1173 M392 327.5H1173 M392 355.5H1173 M392 383.5H1173 M392 411.5H1173 M392 438.5H1173 M392 466.5H1173 M392 494.5H1173 M392 522.5H1173 M392 550.5H1173 M392 578.5H1173 M392 605.5H1173 M392 633.5H1173 M392 661.5H1173 M392 689.5H1173"/>
<path d="M416.5 166V705 M444.5 165V705 M472.5 165V705 M499.5 165V705 M527.5 165V705 M555.5 165V705 M583.5 165V705 M611.5 165V705 M639.5 165V705 M666.5 165V705 M694.5 165V705 M722.5 165V705 M750.5 165V705 M778.5 165V705 M806.5 165V705 M833.5 165V705 M861.5 165V705 M889.5 165V705 M917.5 165V705 M945.5 165V705 M973.5 165V705 M1000.5 165V705 M1028.5 165V705 M1056.5 165V705 M1084.5 165V705 M1112.5 165V705 M1140.5 165V705 M1167.5 165V705"/>
<path d="M416.5 161V162" stroke-dasharray="none"/>
</g>
<rect x="390" y="327" width="783" height="2" fill="#d96666"/>
<rect x="777" y="176" width="2" height="532" fill="#66e066"/>
<g shape-rendering="auto">
<g stroke="#fff" stroke-width="3" fill="none" stroke-linecap="butt">
<path d="M702.5 378.5H742.5V527.5H605.5Z"/>
<path d="M856.5 278.5L911.5 227.5L1000.5 291.5" stroke-width="2.4"/>
<circle cx="936.5" cy="466.3" r="97.3" stroke-width="2.6"/>
<path d="M1038.5 363.5L928.5 436.5L1065.5 535.5" stroke-width="2.4"/>
</g>
<g fill="#ff2600">
<circle cx="778.5" cy="327.5" r="3.6"/>
<circle cx="702.5" cy="378.5" r="3.6"/><circle cx="742.5" cy="378.5" r="3.6"/><circle cx="742.5" cy="527.5" r="3.6"/><circle cx="605.5" cy="527.5" r="3.6"/>
<circle cx="856.5" cy="278.5" r="3.6"/><circle cx="911.5" cy="227.5" r="3.6"/><circle cx="1000.5" cy="291.5" r="3.6"/>
<circle cx="936.5" cy="466.5" r="3.2"/>
<circle cx="1038.5" cy="363.5" r="3.6"/><circle cx="928.5" cy="436.5" r="3.6"/><circle cx="1065.5" cy="535.5" r="3.6"/>
<rect x="715" y="362" width="14" height="4"/>
<rect x="666" y="541" width="14" height="4"/>
<rect x="755" y="447" width="3" height="14"/>
</g>
</g>

</svg><div class="abs" style="left:390px;top:708px;width:111px;height:30px;box-sizing:border-box;border:1px solid #b5b1ab;border-top:none;border-radius:0 0 5px 5px;background:linear-gradient(#e6e4e1,#f0efed)"></div>
<div class="abs" style="left:500px;top:708px;width:137px;height:32px;box-sizing:border-box;border:1px solid #b5b1ab;border-top:none;border-radius:0 0 5px 5px;background:linear-gradient(#f5f4f3,#faf9f8)"></div>
<div class="t" style="left:398.50px;top:714.00px;font-size:14.2px;letter-spacing:0.278px;color:#3c3c3c;font-family:'Liberation Sans',sans-serif;">Start page</div>
<div class="t" style="left:531.30px;top:715.00px;font-size:14.2px;letter-spacing:0.022px;color:#3c3c3c;font-family:'Liberation Sans',sans-serif;">T2-exp : 1*</div>
<svg class="abs" style="left:476px;top:718px" width="12" height="12" viewBox="0 0 12 12"><path d="M1.2 1.2L10.8 10.8M10.8 1.2L1.2 10.8" stroke="#6b6b68" stroke-width="3.1" fill="none"/></svg>
<svg class="abs" style="left:612.6px;top:719px" width="12" height="12" viewBox="0 0 12 12"><path d="M1.2 1.2L10.8 10.8M10.8 1.2L1.2 10.8" stroke="#6b6b68" stroke-width="3.1" fill="none"/></svg>
<svg class="abs" style="left:506px;top:715px" width="18" height="18" viewBox="506 715 18 18"><defs><linearGradient id="gF" x1="0" y1="0" x2="1" y2="1"><stop offset="0" stop-color="#ff3a08"/><stop offset="1" stop-color="#d82800"/></linearGradient></defs><path d="M507.7 717.2H515.3V720H510.8V722.2H514V724.8H510.8V729.5H507.7Z" fill="url(#gF)"/><circle cx="516.5" cy="725.2" r="4.1" fill="none" stroke="#1c3fb0" stroke-width="2.6" stroke-dasharray="1.95 1.27"/><circle cx="516.5" cy="725.2" r="3.3" fill="#2348c0"/><circle cx="516.5" cy="725.2" r="1.35" fill="#f7f6f5"/></svg>
<svg class="abs" style="left:1136px;top:648px" width="38" height="40" viewBox="1136 648 38 40"><path d="M1143 678.5V662" stroke="#1f8a1f" stroke-width="2"/><path d="M1143 657.4L1145.6 664H1140.4Z" fill="#1f8a1f"/><path d="M1143 678.5H1159" stroke="#8a1f1f" stroke-width="2"/><path d="M1164.4 678.5L1157.4 681V676Z" fill="#8a1f1f"/><path d="M1143 675.4L1146.2 678.5L1143 681.6L1139.8 678.5Z" fill="#1a1a8a"/>
<g font-family="Liberation Sans,sans-serif" font-size="9" fill="#000"><text x="1145.8" y="658.6">Y</text><text x="1165.6" y="678.9">X</text><text x="1145.6" y="678.4">Z</text></g></svg>
<svg class="abs" style="left:1178px;top:112px" width="32" height="570" viewBox="1178 112 32 570"><path d="M1190.1 116V120M1192.9 116V120M1195.7 116V120" stroke="#d0cdc8" stroke-width="1"/><g fill="#9d9d9d" stroke="#8a8a8a" stroke-width=".6"><circle cx="1192.9" cy="140.7" r="4.8"/></g><g fill="none" stroke="#9d9d9d" stroke-width="4"><path d="M1187.6 187C1183 181.4 1183.6 175 1189 172C1193.4 169.6 1199 169.4 1204.2 171.2" stroke-width="4.4"/><path d="M1183.6 286L1198.6 273.6M1188.2 293.4L1203.2 281" stroke-width="4.6"/><path d="M1182.4 356.2C1190 355.6 1195.2 359.6 1195 367.2M1189.4 347.4L1202.6 361"/></g><g fill="#9d9d9d" stroke="#8a8a8a" stroke-width=".5"><path d="M1183 421.4L1192 429.9L1183 438.4V433.6L1186.8 429.9L1183 426.2ZM1203.2 421.4L1194.2 429.9L1203.2 438.4V433.6L1199.4 429.9L1203.2 426.2Z"/></g><g fill="none" stroke="#9d9d9d" stroke-width="4"><path d="M1188.2 475V472.6A5.3 5.3 0 0 1 1198.8 472.6V475" stroke-width="3.4"/><path d="M1183.4 655.4L1202.8 646.6M1183.4 653.4L1202.8 665.2M1197.6 649.6V662.2" stroke-width="4.2"/><circle cx="1193.1" cy="619.8" r="10" stroke-width="3.8"/><path d="M1193.1 619.8L1199.4 614" stroke-width="3.2"/></g><g fill="#9d9d9d" stroke="#8a8a8a" stroke-width=".5"><circle cx="1188.8" cy="171.9" r="3.7"/><rect x="1190.4" y="202" width="4.6" height="21.5"/><rect x="1182.2" y="247.2" width="22" height="4.2"/><path d="M1190.4 311.4H1195V326.6H1203.6V331H1182.8V326.6H1190.4Z"/><rect x="1185.4" y="385.6" width="15" height="5.2"/><rect x="1185.4" y="395.4" width="15" height="5.4"/><rect x="1184.6" y="474.6" width="18" height="11"/><path d="M1183.8 506.8H1187V510.8H1200.6V506.8H1203.8V518.2H1200.6V513.8H1187V518.2H1183.8Z"/><path d="M1187 538.6H1199.4V541.6H1195.2V555.4H1199.4V558.4H1187V555.4H1191V541.6H1187Z"/><path d="M1182.8 593.3L1185 584.6L1187.4 587L1197.6 577.6L1195.2 575.2L1203.8 574L1202.2 582.4L1199.8 580L1189.6 589.4L1192 591.8Z"/></g><path d="M1181 452.5H1205" stroke="#dcd9d4" stroke-width="1"/></svg>
<div class="abs" style="left:1214px;top:4px;width:4px;height:740px;background:linear-gradient(90deg,#27437f,#2f559f)"></div>
<div class="abs" style="left:1214px;top:391px;width:4px;height:66px;background:#1b1b1b"></div>
<div class="abs" style="left:1214px;top:457px;width:4px;height:287px;background:#8c8b88"></div>
<div class="abs" style="left:1213px;top:9px;width:2px;height:735px;background:linear-gradient(90deg,#5d5b56,#3b3a37 60%,rgba(40,40,40,.55))"></div>
<div class="abs" style="left:1209px;top:4px;width:6px;height:6px;background:linear-gradient(225deg,#14140f 45%,rgba(20,20,15,0) 55%)"></div>
<div class="abs" style="left:0;top:741px;width:1214px;height:3px;background:linear-gradient(#e4e2df,#bebcb8 40%,#a3a19d 80%,#9b9995)"></div>
<div class="abs" style="left:2px;top:742px;width:300px;height:2px;overflow:hidden"><div class="t" style="left:0;top:-3px;font-size:14.2px;letter-spacing:.6px;color:#33322f">Sketch.Edge 0.0 | E= 00%</div></div>
<div class="abs" style="left:1090px;top:742px;width:120px;height:2px;overflow:hidden"><div class="t" style="left:0;top:-3px;font-size:14.2px;color:#33322f">9.51 / 15.04</div></div>

</body></html>
